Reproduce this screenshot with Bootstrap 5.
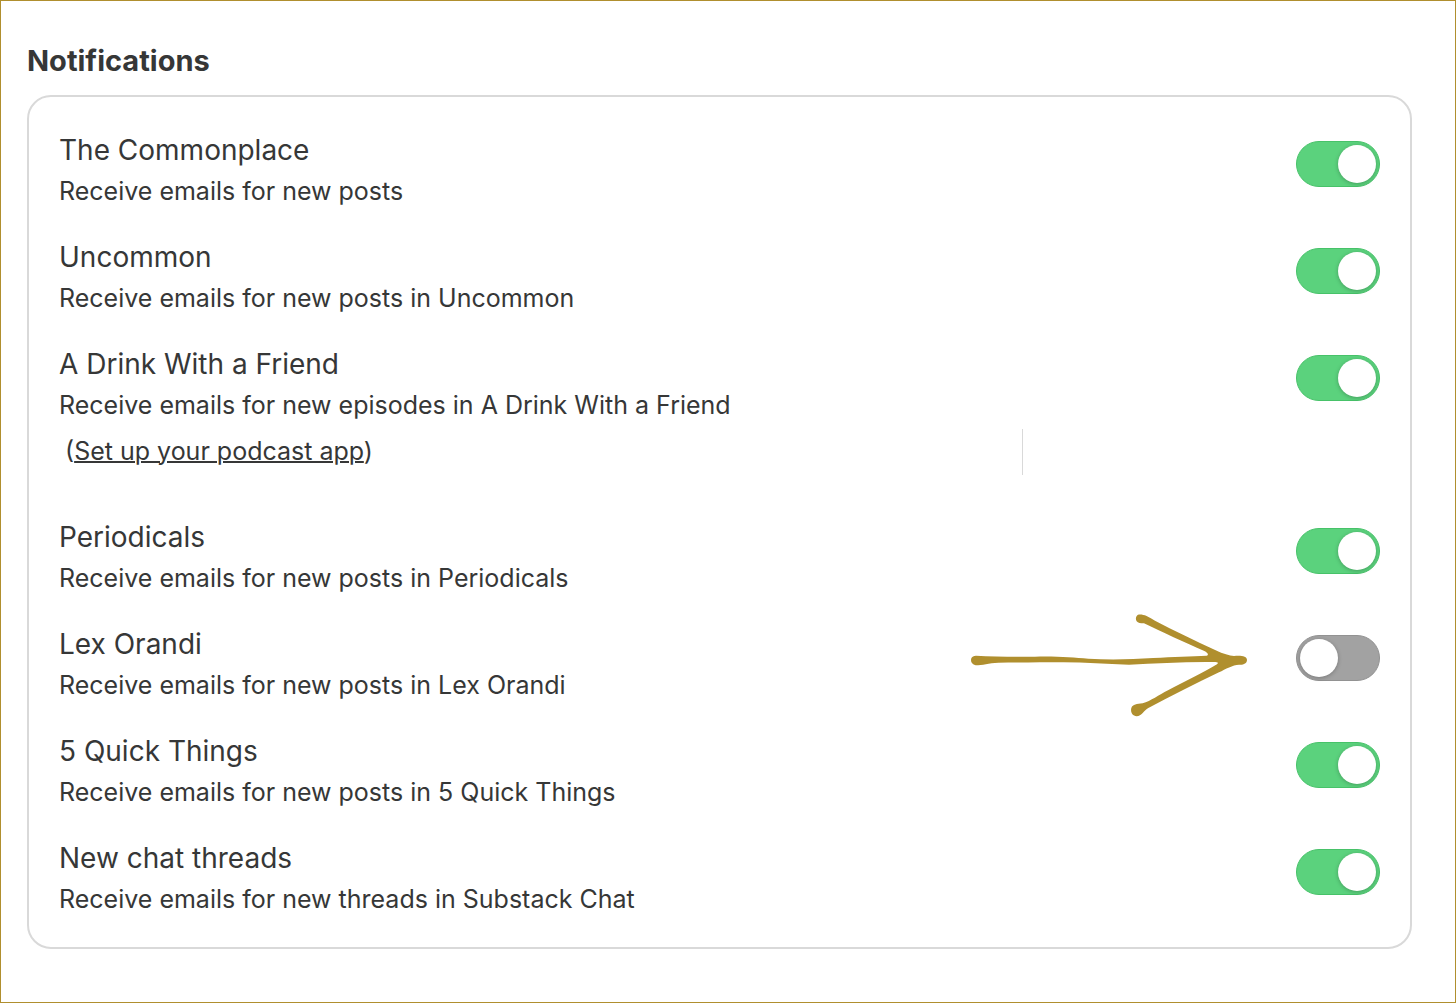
<!DOCTYPE html>
<html lang="en">
<head>
<meta charset="utf-8">
<meta name="viewport" content="width=device-width, initial-scale=1">
<title>Notifications</title>
<link rel="stylesheet" href="https://cdn.jsdelivr.net/npm/bootstrap@5.3.0/dist/css/bootstrap.min.css">
<style>
  body { font-family: Inter, "Liberation Sans", sans-serif; color: #363737; background: #fff; }
  .page-frame { border: 1px solid #b08f2e; padding: 40px 43px 53px 26px; }
  .page-heading { font-size: 29px; line-height: 40px; font-weight: 700; margin-bottom: 14px; }
  .settings-card { border: 2px solid #d9d9d9; border-radius: 24px; padding: 33px 30px 27px; }
  .settings-list { gap: 25px; }
  .setting-title { font-size: 28px; line-height: 41px; }
  .setting-text { font-size: 25px; line-height: 41px; }
  .podcast-row { font-size: 25px; height: 52px; margin-bottom: 14px; padding-left: 6px; }
  .podcast-row a { color: inherit; text-decoration-thickness: 2px; }
  .podcast-divider { width: 1px; height: 46px; background: #d9d9d9; margin-right: 273px; }
  .form-check-input.setting-switch {
    position: relative; width: 84px; height: 46px; margin: 11px 0 0; border: 1px solid #47c269;
    border-radius: 23px; background: #5bd27d; cursor: pointer;
  }
  .setting-switch::before {
    content: ""; position: absolute; top: 3px; right: 3px; width: 38px; height: 38px;
    border-radius: 50%; background: #fff; box-shadow: 0 1px 4px rgba(0, 0, 0, .25);
  }
  .form-check-input.setting-switch:not(:checked) { background: #a2a2a2; border-color: #929292; }
  .setting-switch:not(:checked)::before { right: auto; left: 3px; }
  .hand-arrow { position: absolute; right: 120px; top: -24px; pointer-events: none; }
</style>
<script src="https://cdn.jsdelivr.net/npm/bootstrap@5.3.0/dist/js/bootstrap.bundle.min.js"></script>
</head>
<body>
<main class="page-frame min-vh-100">
  <h1 class="page-heading">Notifications</h1>
  <section class="settings-card">
    <div class="settings-list d-flex flex-column">
      <div class="d-flex align-items-start">
        <label class="flex-grow-1" for="sw1"><span class="setting-title d-block">The Commonplace</span><span class="setting-text d-block">Receive emails for new posts</span></label>
        <input class="form-check-input setting-switch flex-shrink-0" type="checkbox" role="switch" id="sw1" checked>
      </div>
      <div class="d-flex align-items-start">
        <label class="flex-grow-1" for="sw2"><span class="setting-title d-block">Uncommon</span><span class="setting-text d-block">Receive emails for new posts in Uncommon</span></label>
        <input class="form-check-input setting-switch flex-shrink-0" type="checkbox" role="switch" id="sw2" checked>
      </div>
      <div class="d-flex align-items-start">
        <div class="flex-grow-1">
          <label class="d-block" for="sw3"><span class="setting-title d-block">A Drink With a Friend</span><span class="setting-text d-block">Receive emails for new episodes in A Drink With a Friend</span></label>
          <div class="podcast-row d-flex align-items-center justify-content-between">
            <span>(<a href="#">Set up your podcast app</a>)</span>
            <span class="podcast-divider"></span>
          </div>
        </div>
        <input class="form-check-input setting-switch flex-shrink-0" type="checkbox" role="switch" id="sw3" checked>
      </div>
      <div class="d-flex align-items-start">
        <label class="flex-grow-1" for="sw4"><span class="setting-title d-block">Periodicals</span><span class="setting-text d-block">Receive emails for new posts in Periodicals</span></label>
        <input class="form-check-input setting-switch flex-shrink-0" type="checkbox" role="switch" id="sw4" checked>
      </div>
      <div class="d-flex align-items-start position-relative">
        <label class="flex-grow-1" for="sw5"><span class="setting-title d-block">Lex Orandi</span><span class="setting-text d-block">Receive emails for new posts in Lex Orandi</span></label>
        <svg class="hand-arrow" width="300" height="130" viewBox="0 0 900 390" fill="#b08f2e" aria-hidden="true">
          <path d="M48 167C100 170 170 171 225 170C290 168 340 173 385 176C450 180 515 178 580 174C640 170 695 169 740 167C748 164 742 158 733 153C675 128 605 96 552 70C541 70 534 69 530 64C526 58 527 48 534 44C550 42 562 48 585 62C642 92 704 121 767 151C790 162 808 167 822 168C845 166 861 169 861 180C860 191 851 195 837 194C818 195 797 207 777 217C705 252 632 289 565 324C552 331 545 348 530 349C516 348 511 335 514 324C519 312 530 313 548 310C573 303 596 285 624 271C673 246 728 218 771 193C777 188 773 186 760 186C675 185 587 190 507 194C439 193 375 187 311 187C247 187 179 188 115 188C86 189 67 196 47 196C35 193 31 185 34 175C36 170 41 168 48 167Z"/>
        </svg>
        <input class="form-check-input setting-switch flex-shrink-0" type="checkbox" role="switch" id="sw5">
      </div>
      <div class="d-flex align-items-start">
        <label class="flex-grow-1" for="sw6"><span class="setting-title d-block">5 Quick Things</span><span class="setting-text d-block">Receive emails for new posts in 5 Quick Things</span></label>
        <input class="form-check-input setting-switch flex-shrink-0" type="checkbox" role="switch" id="sw6" checked>
      </div>
      <div class="d-flex align-items-start">
        <label class="flex-grow-1" for="sw7"><span class="setting-title d-block">New chat threads</span><span class="setting-text d-block">Receive emails for new threads in Substack Chat</span></label>
        <input class="form-check-input setting-switch flex-shrink-0" type="checkbox" role="switch" id="sw7" checked>
      </div>
    </div>
  </section>
</main>
</body>
</html>
